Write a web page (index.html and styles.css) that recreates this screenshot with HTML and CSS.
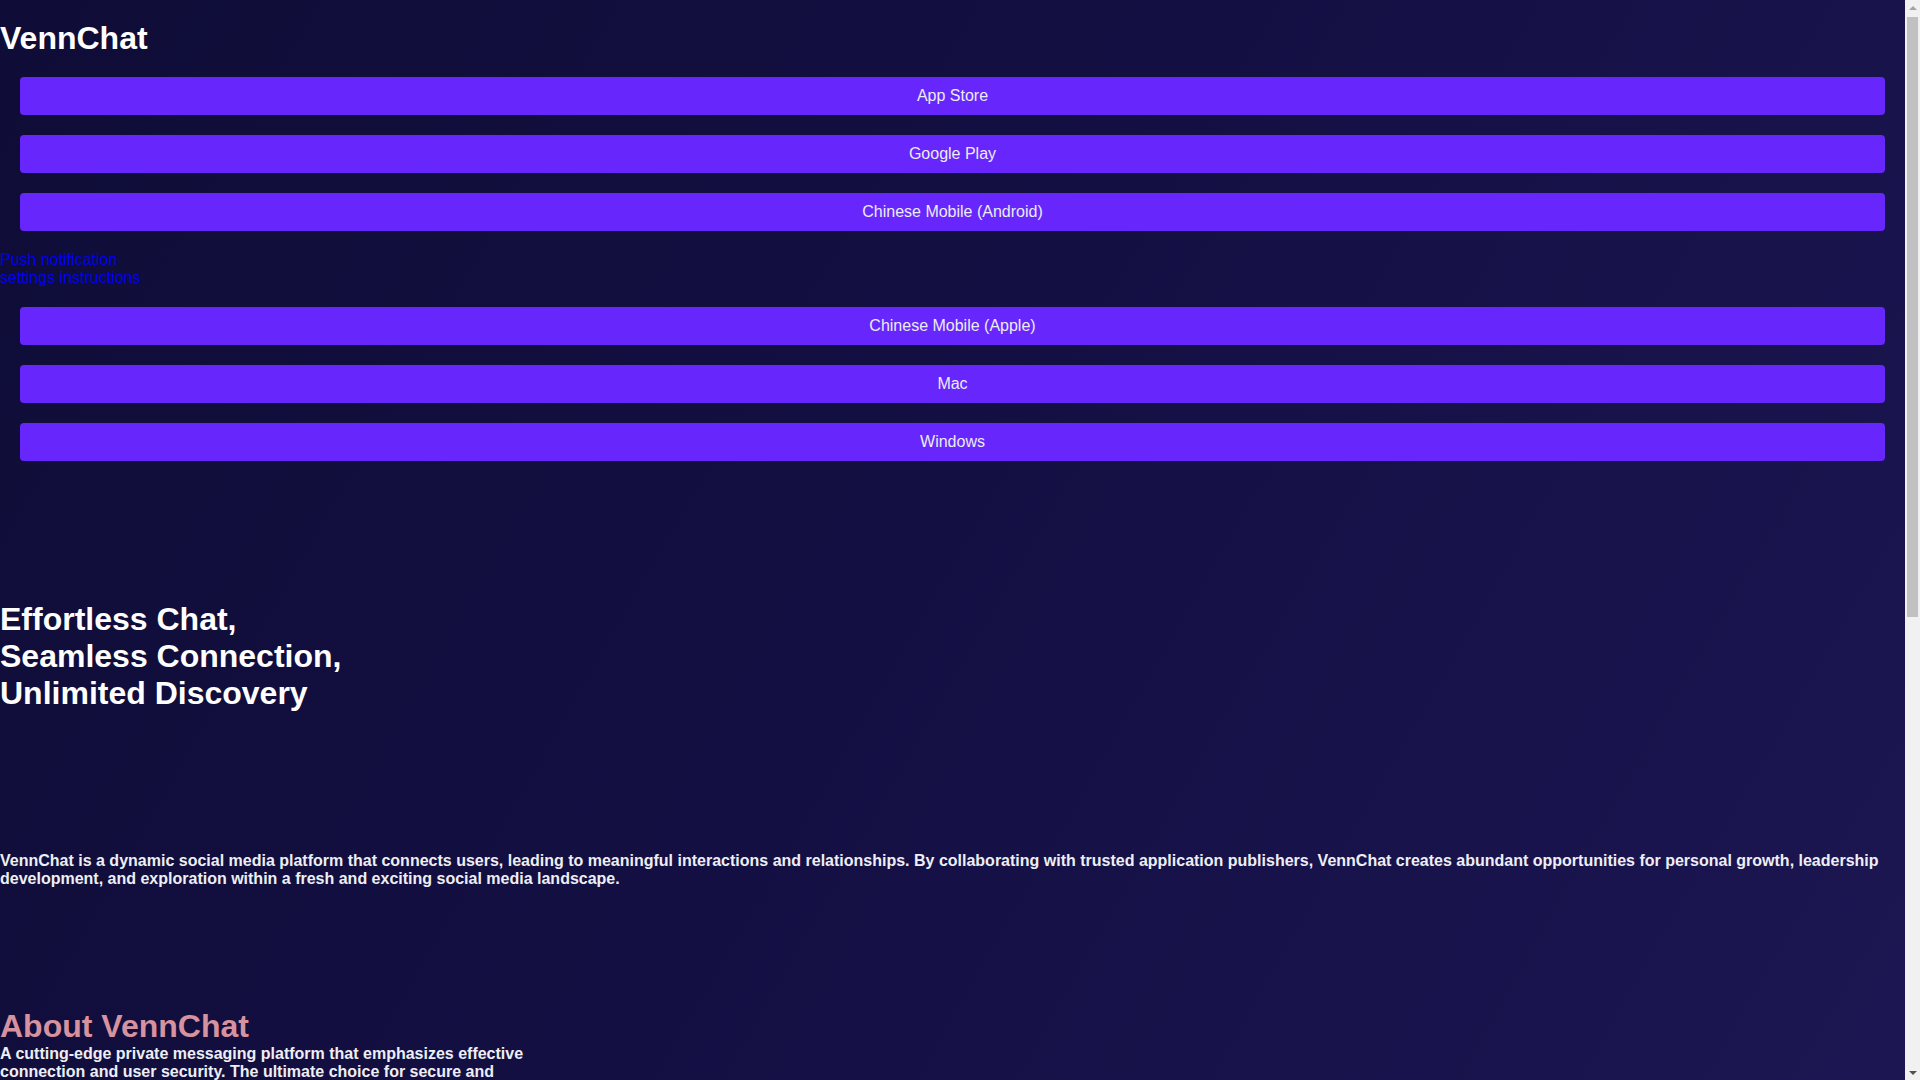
FILE: index.html
```html
<!DOCTYPE html>
<html lang="en">
<head>
<meta charset="utf-8">
<title>VennChat</title>
<link rel="stylesheet" href="styles.css">
</head>
<body>
<div class="page">
  <header class="site-header">
    <h1 class="brand">VennChat</h1>
  </header>
  <nav class="downloads">
    <div class="btn-group">
      <a class="dl-btn" href="#">App Store</a>
      <a class="dl-btn" href="#">Google Play</a>
      <a class="dl-btn" href="#">Chinese Mobile (Android)</a>
    </div>
    <a class="push-link" href="#">Push notification settings instructions</a>
    <div class="btn-group">
      <a class="dl-btn" href="#">Chinese Mobile (Apple)</a>
      <a class="dl-btn" href="#">Mac</a>
      <a class="dl-btn" href="#">Windows</a>
    </div>
  </nav>
  <section class="hero">
    <h2 class="hero-title">Effortless Chat,<br>Seamless Connection,<br>Unlimited Discovery</h2>
  </section>
  <section class="intro">
    <p class="intro-text">VennChat is a dynamic social media platform that connects users, leading to meaningful interactions and relationships. By collaborating with trusted application publishers, VennChat creates abundant opportunities for personal growth, leadership development, and exploration within a fresh and exciting social media landscape.</p>
  </section>
  <section class="about">
    <h2 class="about-title">About VennChat</h2>
    <p class="about-text">A cutting-edge private messaging platform that emphasizes effective connection and user security. The ultimate choice for secure and efficient communication, helping you stay close to the people who matter most.</p>
  </section>
</div>
<div class="scrollbar" aria-hidden="true">
  <div class="sb-arrow sb-up"></div>
  <div class="sb-thumb"></div>
  <div class="sb-track"></div>
  <div class="sb-arrow sb-down"></div>
</div>
</body>
</html>
```

FILE: styles.css
```css
html,
body {
  height: 100%;
  margin: 0;
  overflow: hidden;
}

body {
  display: flex;
  font-family: "Liberation Sans", Arial, sans-serif;
  color: #ffffff;
  background: linear-gradient(120deg, #0f0d37 0%, #130f42 45%, #1c1652 100%);
}

.page {
  flex: 1;
  min-width: 0;
  height: 100vh;
  overflow: hidden;
}

.site-header {
  padding-top: 20px;
}

.brand {
  margin: 0;
  font-size: 32px;
  font-weight: bold;
  line-height: normal;
  color: #ffffff;
}

.downloads {
  margin-top: 20px;
}

.btn-group {
  display: flex;
  flex-direction: column;
  gap: 20px;
  padding: 0 20px;
}

.dl-btn {
  display: flex;
  align-items: center;
  justify-content: center;
  height: 38px;
  border-radius: 4px;
  background: #6726fc;
  color: #ececf2;
  font-size: 16px;
  text-decoration: none;
}

.push-link {
  display: block;
  width: 150px;
  margin: 20px 0;
  font-size: 16px;
  line-height: 18px;
  color: #0000ee;
  text-decoration: none;
}

.hero {
  margin-top: 140px;
}

.hero-title {
  margin: 0;
  font-size: 32px;
  font-weight: bold;
  line-height: normal;
  color: #ffffff;
}

.intro {
  margin-top: 140px;
}

.intro-text {
  margin: 0;
  font-size: 16px;
  font-weight: bold;
  line-height: normal;
  color: #eeeef4;
}

.about {
  margin-top: 120px;
}

.about-title {
  margin: 0;
  font-size: 32px;
  font-weight: bold;
  line-height: normal;
  color: #d6939f;
}

.about-text {
  margin: 0;
  width: 540px;
  font-size: 16px;
  font-weight: bold;
  line-height: normal;
  color: #eeeef4;
}

/* classic scrollbar column */
.scrollbar {
  flex: 0 0 15px;
  display: flex;
  flex-direction: column;
  height: 100vh;
  background: #f1f1f1;
}

.sb-arrow {
  flex: 0 0 15px;
  display: flex;
  align-items: center;
  justify-content: center;
}

.sb-arrow::before {
  content: "";
  width: 0;
  height: 0;
  border-left: 4px solid transparent;
  border-right: 4px solid transparent;
}

.sb-up::before {
  border-bottom: 4px solid #a3a3a3;
}

.sb-down::before {
  border-top: 4px solid #505050;
}

.sb-thumb {
  flex: 0 0 600px;
  margin: 2px 2px 0;
  background: #c1c1c1;
}

.sb-track {
  flex: 1;
}
```
